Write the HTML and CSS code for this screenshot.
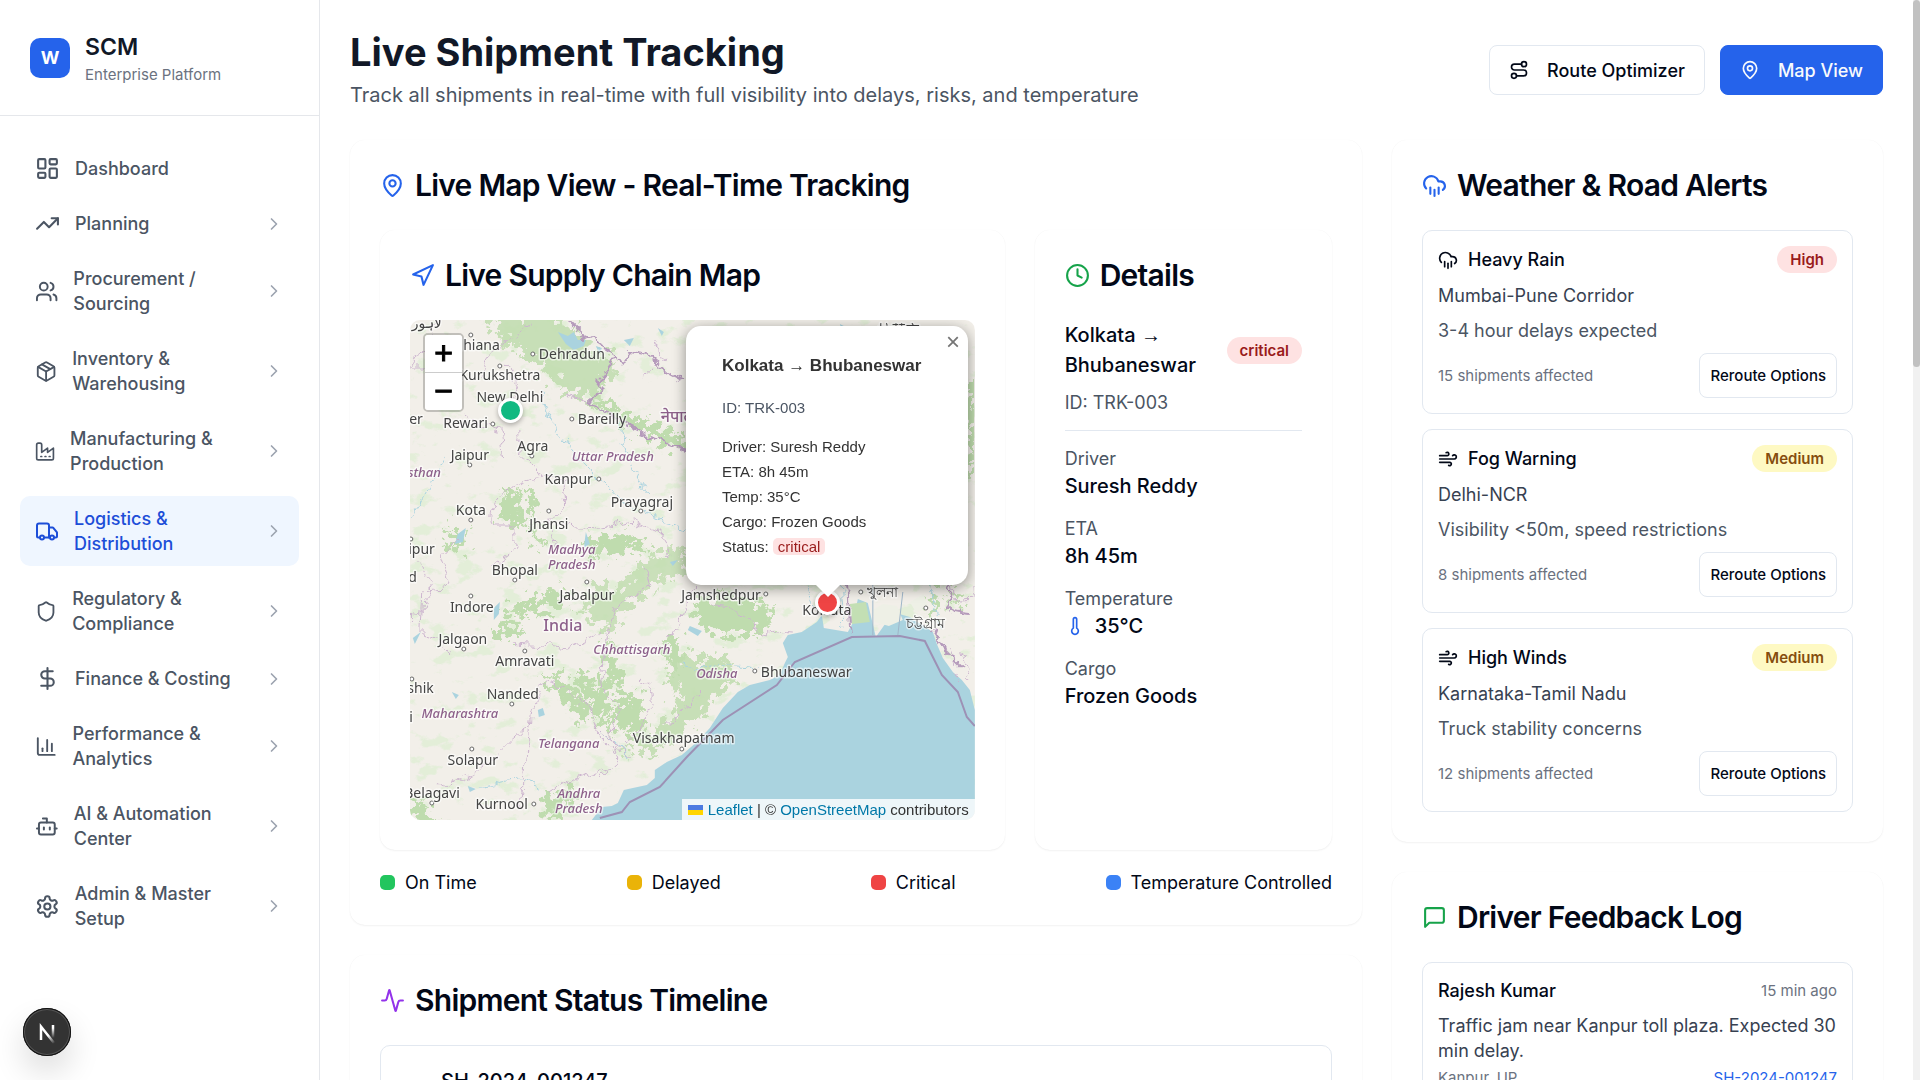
FILE: index.html
```html
<!DOCTYPE html>
<html lang="en">
<head>
<meta charset="utf-8">
<meta name="viewport" content="width=device-width, initial-scale=1">
<title>Live Shipment Tracking</title>
<link rel="stylesheet" href="styles.css">
</head>
<body>
<svg class="sprite" aria-hidden="true">
  <symbol id="chevron" viewBox="0 0 24 24"><path d="m9 18 6-6-6-6"/></symbol>
  <symbol id="dashboard" viewBox="0 0 24 24"><rect x="3" y="3" width="7" height="9" rx="1"/><rect x="14" y="3" width="7" height="5" rx="1"/><rect x="14" y="12" width="7" height="9" rx="1"/><rect x="3" y="16" width="7" height="5" rx="1"/></symbol>
  <symbol id="trend" viewBox="0 0 24 24"><path d="M22 7l-8.500 8.500-5-5L2 17"/><path d="M16 7h6v6"/></symbol>
  <symbol id="users" viewBox="0 0 24 24"><path d="M16 21v-2a4 4 0 0 0-4-4H6a4 4 0 0 0-4 4v2"/><circle cx="9" cy="7" r="4"/><path d="M22 21v-2a4 4 0 0 0-3-3.870"/><path d="M16 3.130a4 4 0 0 1 0 7.750"/></symbol>
  <symbol id="package" viewBox="0 0 24 24"><path d="M11 21.730a2 2 0 0 0 2 0l7-4A2 2 0 0 0 21 16V8a2 2 0 0 0-1-1.730l-7-4a2 2 0 0 0-2 0l-7 4A2 2 0 0 0 3 8v8a2 2 0 0 0 1 1.730z"/><path d="M12 22V12"/><path d="M3.290 7 12 12l8.710-5"/><path d="m7.500 4.270 9 5.150"/></symbol>
  <symbol id="factory" viewBox="0 0 24 24"><path d="M2 20a2 2 0 0 0 2 2h16a2 2 0 0 0 2-2V8l-7 5V8l-7 5V4a2 2 0 0 0-2-2H4a2 2 0 0 0-2 2Z"/><path d="M17 18h1"/><path d="M12 18h1"/><path d="M7 18h1"/></symbol>
  <symbol id="truck" viewBox="0 0 24 24"><path d="M14 18V6a2 2 0 0 0-2-2H4a2 2 0 0 0-2 2v11a1 1 0 0 0 1 1h2"/><path d="M15 18H9"/><path d="M19 18h2a1 1 0 0 0 1-1v-3.650a1 1 0 0 0-.220-.624l-3.480-4.350A1 1 0 0 0 17.520 8H14"/><circle cx="17" cy="18" r="2"/><circle cx="7" cy="18" r="2"/></symbol>
  <symbol id="shield" viewBox="0 0 24 24"><path d="M20 13c0 5-3.500 7.500-7.660 8.950a1 1 0 0 1-.670-.010C7.500 20.500 4 18 4 13V6a1 1 0 0 1 1-1c2 0 4.500-1.200 6.240-2.720a1.170 1.170 0 0 1 1.520 0C14.510 3.810 17 5 19 5a1 1 0 0 1 1 1z"/></symbol>
  <symbol id="dollar" viewBox="0 0 24 24"><path d="M12 2v20"/><path d="M17 5H9.500a3.500 3.500 0 0 0 0 7h5a3.500 3.500 0 0 1 0 7H6"/></symbol>
  <symbol id="chart" viewBox="0 0 24 24"><path d="M3 3v16a2 2 0 0 0 2 2h16"/><path d="M18 17V9"/><path d="M13 17V5"/><path d="M8 17v-3"/></symbol>
  <symbol id="bot" viewBox="0 0 24 24"><path d="M12 8V4H8"/><rect x="4" y="8" width="16" height="12" rx="2"/><path d="M2 14h2"/><path d="M20 14h2"/><path d="M15 13v2"/><path d="M9 13v2"/></symbol>
  <symbol id="gear" viewBox="0 0 24 24"><path d="M12.220 2h-.440a2 2 0 0 0-2 2v.180a2 2 0 0 1-1 1.730l-.430.250a2 2 0 0 1-2 0l-.150-.080a2 2 0 0 0-2.730.730l-.220.380a2 2 0 0 0 .730 2.730l.150.100a2 2 0 0 1 1 1.720v.510a2 2 0 0 1-1 1.740l-.150.090a2 2 0 0 0-.730 2.730l.220.380a2 2 0 0 0 2.730.730l.150-.080a2 2 0 0 1 2 0l.430.250a2 2 0 0 1 1 1.730V20a2 2 0 0 0 2 2h.440a2 2 0 0 0 2-2v-.180a2 2 0 0 1 1-1.730l.430-.250a2 2 0 0 1 2 0l.150.080a2 2 0 0 0 2.730-.730l.220-.390a2 2 0 0 0-.730-2.730l-.150-.080a2 2 0 0 1-1-1.740v-.500a2 2 0 0 1 1-1.740l.150-.090a2 2 0 0 0 .730-2.730l-.220-.380a2 2 0 0 0-2.730-.730l-.150.080a2 2 0 0 1-2 0l-.430-.250a2 2 0 0 1-1-1.730V4a2 2 0 0 0-2-2z"/><circle cx="12" cy="12" r="3"/></symbol>
  <symbol id="route" viewBox="0 0 24 24"><circle cx="6" cy="19" r="3"/><path d="M9 19h8.500a3.500 3.500 0 0 0 0-7h-11a3.500 3.500 0 0 1 0-7H15"/><circle cx="18" cy="5" r="3"/></symbol>
  <symbol id="pin" viewBox="0 0 24 24"><path d="M20 10c0 4.993-5.539 10.193-7.399 11.799a1 1 0 0 1-1.202 0C9.539 20.193 4 14.993 4 10a8 8 0 0 1 16 0"/><circle cx="12" cy="10" r="3"/></symbol>
  <symbol id="navigation" viewBox="0 0 24 24"><path d="M3 11 22 2l-9 19-2-8-8-2z"/></symbol>
  <symbol id="clock" viewBox="0 0 24 24"><circle cx="12" cy="12" r="10"/><path d="M12 6v6l4 2"/></symbol>
  <symbol id="thermometer" viewBox="0 0 24 24"><path d="M14 4v10.540a4 4 0 1 1-4 0V4a2 2 0 0 1 4 0Z"/></symbol>
  <symbol id="rain" viewBox="0 0 24 24"><path d="M4 14.899A7 7 0 1 1 15.710 8h1.790a4.500 4.500 0 0 1 2.500 8.242"/><path d="M16 14v6"/><path d="M8 14v6"/><path d="M12 16v6"/></symbol>
  <symbol id="wind" viewBox="0 0 24 24"><path d="M12.800 19.600A2 2 0 1 0 14 16H2"/><path d="M17.500 8a2.500 2.500 0 1 1 2 4H2"/><path d="M9.800 4.400A2 2 0 1 1 11 8H2"/></symbol>
  <symbol id="message" viewBox="0 0 24 24"><path d="M21 15a2 2 0 0 1-2 2H7l-4 4V5a2 2 0 0 1 2-2h14a2 2 0 0 1 2 2z"/></symbol>
  <symbol id="activity" viewBox="0 0 24 24"><path d="M22 12h-2.480a2 2 0 0 0-1.930 1.460l-2.350 8.360a.250.250 0 0 1-.480 0L9.240 2.180a.250.250 0 0 0-.480 0l-2.350 8.360A2 2 0 0 1 4.490 12H2"/></symbol>
</svg>

<div class="app">
  <aside class="sidebar">
    <div class="brand">
      <span class="brand-mark">W</span>
      <div>
        <div class="brand-name">SCM</div>
        <div class="brand-sub">Enterprise Platform</div>
      </div>
    </div>
    <nav class="nav">
      <a class="nav-item" href="#"><span class="nav-label"><svg class="icon"><use href="#dashboard"/></svg><span>Dashboard</span></span></a>
      <button class="nav-item" type="button"><span class="nav-label"><svg class="icon"><use href="#trend"/></svg><span>Planning</span></span><svg class="icon-sm chevron"><use href="#chevron"/></svg></button>
      <button class="nav-item" type="button"><span class="nav-label"><svg class="icon"><use href="#users"/></svg><span>Procurement / Sourcing</span></span><svg class="icon-sm chevron"><use href="#chevron"/></svg></button>
      <button class="nav-item" type="button"><span class="nav-label"><svg class="icon"><use href="#package"/></svg><span>Inventory &amp; Warehousing</span></span><svg class="icon-sm chevron"><use href="#chevron"/></svg></button>
      <button class="nav-item" type="button"><span class="nav-label"><svg class="icon"><use href="#factory"/></svg><span>Manufacturing &amp; Production</span></span><svg class="icon-sm chevron"><use href="#chevron"/></svg></button>
      <button class="nav-item active" type="button"><span class="nav-label"><svg class="icon"><use href="#truck"/></svg><span>Logistics &amp; Distribution</span></span><svg class="icon-sm chevron"><use href="#chevron"/></svg></button>
      <button class="nav-item" type="button"><span class="nav-label"><svg class="icon"><use href="#shield"/></svg><span>Regulatory &amp; Compliance</span></span><svg class="icon-sm chevron"><use href="#chevron"/></svg></button>
      <button class="nav-item" type="button"><span class="nav-label"><svg class="icon"><use href="#dollar"/></svg><span>Finance &amp; Costing</span></span><svg class="icon-sm chevron"><use href="#chevron"/></svg></button>
      <button class="nav-item" type="button"><span class="nav-label"><svg class="icon"><use href="#chart"/></svg><span>Performance &amp; Analytics</span></span><svg class="icon-sm chevron"><use href="#chevron"/></svg></button>
      <button class="nav-item" type="button"><span class="nav-label"><svg class="icon"><use href="#bot"/></svg><span>AI &amp; Automation Center</span></span><svg class="icon-sm chevron"><use href="#chevron"/></svg></button>
      <button class="nav-item" type="button"><span class="nav-label"><svg class="icon"><use href="#gear"/></svg><span>Admin &amp; Master Setup</span></span><svg class="icon-sm chevron"><use href="#chevron"/></svg></button>
    </nav>
  </aside>

  <main class="main">
    <header class="page-head">
      <div>
        <h1>Live Shipment Tracking</h1>
        <p class="subtitle">Track all shipments in real-time with full visibility into delays, risks, and temperature</p>
      </div>
      <div class="actions">
        <button class="btn" type="button"><svg class="icon-sm"><use href="#route"/></svg>Route Optimizer</button>
        <button class="btn btn-primary" type="button"><svg class="icon-sm"><use href="#pin"/></svg>Map View</button>
      </div>
    </header>

    <div class="columns">
      <div class="col-main">
        <section class="card">
          <h2 class="card-title"><svg class="icon blue"><use href="#pin"/></svg>Live Map View - Real-Time Tracking</h2>
          <div class="map-grid">
            <section class="card map-card">
              <h2 class="card-title"><svg class="icon blue"><use href="#navigation"/></svg>Live Supply Chain Map</h2>
              <div class="map">
                <svg class="map-tiles" viewBox="0 0 565 500" preserveAspectRatio="xMidYMid slice" role="img" aria-label="Map of India">
                  <defs>
                    <filter id="rough" x="0" y="0" width="565" height="500" filterUnits="userSpaceOnUse"><feTurbulence type="fractalNoise" baseFrequency="0.120" numOctaves="4" seed="4"/><feDisplacementMap in="SourceGraphic" scale="38" xChannelSelector="R" yChannelSelector="G"/></filter>
                    <filter id="speckle" x="0" y="0" width="565" height="500" filterUnits="userSpaceOnUse"><feTurbulence type="fractalNoise" baseFrequency="0.045 0.070" numOctaves="5" seed="11"/><feColorMatrix values="0 0 0 0 0.720  0 0 0 0 0.850  0 0 0 0 0.640  0 9 0 0 -5.200"/><feComposite in2="SourceGraphic" operator="in"/></filter>
                    <filter id="jag" x="-10" y="-10" width="585" height="520" filterUnits="userSpaceOnUse"><feTurbulence type="fractalNoise" baseFrequency="0.090" numOctaves="3" seed="7"/><feDisplacementMap in="SourceGraphic" scale="14" xChannelSelector="R" yChannelSelector="G"/></filter>
                  </defs>
                  <rect width="565" height="500" fill="#f2efe9"/>
                  <rect width="565" height="500" fill="#fff" filter="url(#speckle)" opacity=".700"/>
                  <g fill="#bfdcae" filter="url(#rough)">
                    <path d="M78-5h75l24 32 30 15-24 40-27-10-33-30-32-22z" opacity=".850"/>
                    <path d="M188 76l32 18 55 22v14l-40-14-48-30z"/>
                    <path d="M95 172l14-2-2 20 12 14-18 4-10-16zM118 172l10 2-2 24 8 30-10-6-6-30zM32 208l24 4-6 18-10-4z"/>
                    <path d="M172 222l44-10 24 14-20 4-38 10zM92 290l42-16 30-4-12 14-54 14zM82 308l30-4-8 14-16 2z"/>
                    <path d="M240 236l38-8v24l-30 6-16 22-22 8-8 26-18-12-14-14 16-26 18 10z" opacity=".800"/>
                    <path d="M200 318l12 40-14 22 6 36-16-20-24-40 14-4 10 20zM212 372l18 4 4 30-16 10-16-22z"/>
                    <path d="M266 330l26 10 22-8 6 30-20 24-26 26-20 10-20 14-14-4 10-16 30-16 8-24-10-20z" opacity=".850"/>
                    <path d="M284 282l30-6 50 10-12 28-36 4-30-16zM250 322l20-6 2 30-8 8z"/>
                    <path d="M132 352l20 6 24 24 4 24-14-10-20-26zM136 476l20-8 18 6-24 12-6 18h-10zM-2 474l16 10 14 18H4z"/>
                    <path d="M558 70l10-14v100l-12-6zM540 268l8-4 2 20-8 4zM520 266l10 6-4 26-8-4z"/>
                  </g>
                  <g fill="#aad3df">
                    <path d="M182 500l10-13 10-1 6-3 6-13 9-2 14-3 8-7 0-8 12-8 15-7 15-13 13-14 13-20 15-16 12-7 20-5 10-5 5-12 3-6-5-14 5-8 14-3 15-10 5-7 2 13 24 4 5-9 5-24 10 4 8 34 10-14 10-10 14 4L523 312l4 12 6 14 10 14 9 8 8 10 5 20V500z"/>
                    <path d="M148 12l10 4 6-4 4 8 8 0-2 6-10 4-8-6zM186 26l6 2-2 6zM214 20l10-2-4 8zM248 8l6 4-2 4zM340 6l10 2-4 6zM430 4l8 4-6 2zM176 212l4 12-6 4z"/>
                    <path d="M48 214l8-6-3 14-8 2zM84 288l6-6-1 12-5 6zM42 372l7 3-3 4zM58 466l8 3-6 3zM128 390l5-2 2 7-6 2zM3 318l8-6-6 12zM280 306l12 5-4 5-10-6zM286 308l8-3zM260 242l8-2-5 6z"/>
                  </g>
                  <g fill="none" stroke="#aad3df" filter="url(#jag)">
                    <path d="M130 70c10 40 30 60 60 90s50 40 90 50M210 105c6 30 12 50 30 70M0 200c20-30 24-40 34-60M190 410c10 10 26 16 30 30M70 468c20 0 30-14 60-2M270 345c30 8 50-6 80 6M392 250l12 40M430 245l4 60M520 265l10 45"/>
                  </g>
                  <path d="M463 290l10-6 14 2 6 14-14 6-14-4zM500 282l14-8 4 12-12 6z" fill="#eef0e6"/>
                  <path d="M440 284l16-2 4 20-18 2z" fill="#c3dfb4"/>
                  <g fill="none" stroke="#cdb5cf" filter="url(#jag)">
                    <path d="M30 0C16 20 10 36 0 50M0 46h24M54 92l14 12 22 6 4 26M96 84c14-8 14-30 0-40M93 24c-20 12-20 26-22 32M93 24l30-20M110 110v26l16 10 6 10 22 6 2 20-18 20 8 22M132 156c-40 8-56 36-48 50h20v24l-20 16M50 216l-18 20 10 30-30 4-2 44 22 6 8 16M150 205l40 2 34-6 30 14 6 20M300 250l-20 20-8 30-14 20M196 320l10-34 34-22-6-20M104 323l30 2 24 4 34-16M10 240l12 30-10 20M0 300l14-12M196 320l-6 50 20 18-10 24 10 26-20 20M132 362l20 4 26 20 10 28 20 20M132 362l-10 30-6 46-6 50M120 406c-30 20-30 40-90 60M232 360c20 10 10 40-20 66M250 405l10 0 14-14 16-18M200 448c-20 6-40 10-60 24M300 285c20 0 40 10 44 22s20 4 40 6M190 410l30 26M537 240l6 40 20-2 2-20"/>
                    <path d="M245 20l8 20-22 18M180 83l-26-10"/>
                    <path d="M545 352l6 12M552 330l8 26M540 326l4 20"/>
                  </g>
                  <g fill="none" stroke="#b59abb" stroke-width="2">
                    <g filter="url(#jag)"><path d="M157 0l15 15 15 7 20 13 6 8 7-11 18 3 19 17 18 10M207 37l-17 21-2 12-8 13 37 22 20 10 20 7 18 8M437 265l4 50M537 262l5 30 18 2M522 310l12 20 20 20"/></g>
                    <path d="M190 498l22-6 8-10 30-15 27-30 36-37 54-35 18-23 57-25 48-1 25 5 8 16 9 18 16 17 9 25 8 9" stroke="#9d91b5"/>
                    <path d="M463 265v50M493 272l-5 43" stroke="#9fb6c9" stroke-width="1"/>
                  </g>
                  <g class="dots"><circle cx="61" cy="15" r="2"/><circle cx="123" cy="34" r="2"/><circle cx="90" cy="46" r="2"/><circle cx="83" cy="104" r="2"/><circle cx="162" cy="99" r="2"/><circle cx="122" cy="136" r="2"/><circle cx="60" cy="145" r="2"/><circle cx="189" cy="159" r="2"/><circle cx="231" cy="191" r="2"/><circle cx="61" cy="200" r="2"/><circle cx="139" cy="191" r="2"/><circle cx="1" cy="219" r="2"/><circle cx="105" cy="260" r="2"/><circle cx="177" cy="262" r="2"/><circle cx="356" cy="274" r="2"/><circle cx="61" cy="276" r="2"/><circle cx="54" cy="329" r="2"/><circle cx="115" cy="331" r="2"/><circle cx="2" cy="359" r="2"/><circle cx="102" cy="384" r="2"/><circle cx="272" cy="429" r="2"/><circle cx="62" cy="429" r="2"/><circle cx="22" cy="483" r="2"/><circle cx="124" cy="484" r="2"/><circle cx="345" cy="351" r="2"/><circle cx="451" cy="272" r="2"/><circle cx="516" cy="288" r="2"/></g>
                  <g class="city">
                    <text x="17" y="8" class="mid">لاہور</text>
                    <text x="90" y="30" class="end">Ludhiana</text>
                    <text x="129" y="39">Dehradun</text>
                    <text x="90" y="60" class="mid">Kurukshetra</text>
                    <text x="100" y="82" class="mid">New Delhi</text>
                    <text x="78" y="108" class="end">Rewari</text>
                    <text x="13" y="104" class="end">Bikaner</text>
                    <text x="168" y="104">Bareilly</text>
                    <text x="123" y="131" class="mid">Agra</text>
                    <text x="60" y="140" class="mid">Jaipur</text>
                    <text x="183" y="164" class="end">Kanpur</text>
                    <text x="232" y="187" class="mid">Prayagraj</text>
                    <text x="61" y="195" class="mid">Kota</text>
                    <text x="139" y="209" class="mid">Jhansi</text>
                    <text x="25" y="234" class="end">Udaipur</text>
                    <text x="105" y="255" class="mid">Bhopal</text>
                    <text x="7" y="262" class="end">Ahmedabad</text>
                    <text x="177" y="280" class="mid">Jabalpur</text>
                    <text x="351" y="280" class="end">Jamshedpur</text>
                    <text x="62" y="292" class="mid">Indore</text>
                    <text x="53" y="324" class="mid">Jalgaon</text>
                    <text x="115" y="346" class="mid">Amravati</text>
                    <text x="24" y="373" class="end">Nashik</text>
                    <text x="103" y="379" class="mid">Nanded</text>
                    <text x="3" y="402" class="end">Mumbai</text>
                    <text x="223" y="423">Visakhapatnam</text>
                    <text x="63" y="445" class="mid">Solapur</text>
                    <text x="50" y="478" class="end">Belagavi</text>
                    <text x="118" y="489" class="end">Kurnool</text>
                    <text x="351" y="357">Bhubaneswar</text>
                    <text x="417" y="295" class="mid">Kolkata</text>
                    <text x="457" y="277">খুলনা</text>
                    <text x="516" y="308" class="mid">চট্টগ্রাম</text>
                    <text x="468" y="15">拉薩市</text>
                  </g>
                  <g class="state">
                    <text x="31" y="157" class="end">Rajasthan</text>
                    <text x="203" y="141" class="mid">Uttar Pradesh</text>
                    <text x="162" y="234" class="mid">Madhya</text>
                    <text x="162" y="249" class="mid">Pradesh</text>
                    <text x="222" y="334" class="mid">Chhattisgarh</text>
                    <text x="50" y="398" class="mid">Maharashtra</text>
                    <text x="159" y="428" class="mid">Telangana</text>
                    <text x="169" y="478" class="mid">Andhra</text>
                    <text x="169" y="493" class="mid">Pradesh</text>
                    <text x="307" y="358" class="mid">Odisha</text>
                  </g>
                  <g class="country">
                    <text x="153" y="311" class="mid">India</text>
                    <text x="251" y="102">नेपाल</text>
                  </g>
                </svg>
                <span class="marker marker-ok"></span>
                <span class="marker marker-critical"></span>
                <div class="zoom-control">
                  <button type="button" aria-label="Zoom in">+</button>
                  <button type="button" aria-label="Zoom out">−</button>
                </div>
                <div class="popup">
                  <button class="popup-close" type="button" aria-label="Close popup">×</button>
                  <h3>Kolkata <span class="arrow">→</span> Bhubaneswar</h3>
                  <p class="popup-id">ID: TRK-003</p>
                  <div>Driver: Suresh Reddy</div>
                  <div>ETA: 8h 45m</div>
                  <div>Temp: 35°C</div>
                  <div>Cargo: Frozen Goods</div>
                  <div>Status: <span class="popup-status">critical</span></div>
                  <svg class="popup-tip" viewBox="0 0 24 12"><path d="M0 0h24L12 12z" fill="#fff"/></svg>
                </div>
                <div class="attribution">
                  <svg class="flag" viewBox="0 0 15 10"><path fill="#4c7be1" d="M0 0h15v5H0z"/><path fill="#ffd500" d="M0 5h15v5H0z"/></svg>
                  <span><a href="#">Leaflet</a> | © <a href="#">OpenStreetMap</a> contributors</span>
                </div>
              </div>
            </section>

            <section class="card">
              <h2 class="card-title"><svg class="icon green"><use href="#clock"/></svg>Details</h2>
              <div class="detail-head">
                <h3>Kolkata <span class="arrow">→</span> Bhubaneswar</h3>
                <span class="badge badge-red">critical</span>
              </div>
              <p class="detail-id">ID: TRK-003</p>
              <dl class="details">
                <div><dt>Driver</dt><dd>Suresh Reddy</dd></div>
                <div><dt>ETA</dt><dd>8h 45m</dd></div>
                <div><dt>Temperature</dt><dd><svg class="icon-sm blue"><use href="#thermometer"/></svg>35°C</dd></div>
                <div><dt>Cargo</dt><dd>Frozen Goods</dd></div>
              </dl>
            </section>
          </div>
          <ul class="legend">
            <li><span class="swatch on-time"></span>On Time</li>
            <li><span class="swatch delayed"></span>Delayed</li>
            <li><span class="swatch critical"></span>Critical</li>
            <li><span class="swatch temperature"></span>Temperature Controlled</li>
          </ul>
        </section>

        <section class="card">
          <h2 class="card-title"><svg class="icon purple"><use href="#activity"/></svg>Shipment Status Timeline</h2>
          <div class="shipment">
            <svg class="icon blue"><use href="#truck"/></svg>
            <div class="shipment-id">SH-2024-001247</div>
          </div>
        </section>
      </div>

      <div class="col-side">
        <section class="card">
          <h2 class="card-title"><svg class="icon blue"><use href="#rain"/></svg>Weather &amp; Road Alerts</h2>
          <div class="stack">
            <article class="alert">
              <div class="row"><h3><svg class="icon-sm"><use href="#rain"/></svg>Heavy Rain</h3><span class="badge badge-red">High</span></div>
              <p class="place">Mumbai-Pune Corridor</p>
              <p class="note">3-4 hour delays expected</p>
              <div class="row"><span class="meta">15 shipments affected</span><button class="btn btn-sm" type="button">Reroute Options</button></div>
            </article>
            <article class="alert">
              <div class="row"><h3><svg class="icon-sm"><use href="#wind"/></svg>Fog Warning</h3><span class="badge badge-yellow">Medium</span></div>
              <p class="place">Delhi-NCR</p>
              <p class="note">Visibility &lt;50m, speed restrictions</p>
              <div class="row"><span class="meta">8 shipments affected</span><button class="btn btn-sm" type="button">Reroute Options</button></div>
            </article>
            <article class="alert">
              <div class="row"><h3><svg class="icon-sm"><use href="#wind"/></svg>High Winds</h3><span class="badge badge-yellow">Medium</span></div>
              <p class="place">Karnataka-Tamil Nadu</p>
              <p class="note">Truck stability concerns</p>
              <div class="row"><span class="meta">12 shipments affected</span><button class="btn btn-sm" type="button">Reroute Options</button></div>
            </article>
          </div>
        </section>

        <section class="card">
          <h2 class="card-title"><svg class="icon green"><use href="#message"/></svg>Driver Feedback Log</h2>
          <article class="feedback">
            <div class="row"><h3>Rajesh Kumar</h3><span class="meta">15 min ago</span></div>
            <p class="message">Traffic jam near Kanpur toll plaza. Expected 30 min delay.</p>
            <div class="row"><span class="meta">Kanpur, UP</span><a class="ref" href="#">SH-2024-001247</a></div>
          </article>
        </section>
      </div>
    </div>
  </main>
  <div class="rail"><div class="thumb"></div></div>
</div>

<button class="dev-badge" type="button" aria-label="Open developer tools">
  <svg viewBox="0 0 48 48" fill="none" stroke-width="2.500">
    <defs>
      <linearGradient id="fade-down" gradientUnits="userSpaceOnUse" x1="0" y1="20" x2="0" y2="30"><stop offset="0" stop-color="#fff"/><stop offset="1" stop-color="#fff" stop-opacity="0"/></linearGradient>
      <linearGradient id="fade-out" gradientUnits="userSpaceOnUse" x1="26" y1="27" x2="32" y2="35"><stop offset="0" stop-color="#fff"/><stop offset="1" stop-color="#fff" stop-opacity="0"/></linearGradient>
    </defs>
    <path d="M18 32V18.500L31 35" stroke="url(#fade-out)"/>
    <path d="M30 17v13" stroke="url(#fade-down)"/>
  </svg>
</button>
</body>
</html>
```
FILE: styles.css
```css
*, *::before, *::after { box-sizing: border-box; }

body, h1, h2, h3, p, ul, dl, dd { margin: 0; padding: 0; }

body {
  font-family: Inter, "Noto Sans", sans-serif;
  font-size: 17px;
  line-height: 25px;
  color: #020817;
  background: #fff;
  overflow: hidden;
}

button {
  font: inherit;
  color: inherit;
  background: none;
  border: 0;
  cursor: pointer;
}

a { color: inherit; text-decoration: none; }

.sprite { display: none; }

.icon, .icon-sm {
  fill: none;
  stroke: currentColor;
  stroke-width: 2;
  stroke-linecap: round;
  stroke-linejoin: round;
}

.icon { width: 25px; height: 25px; }
.icon-sm { width: 20px; height: 20px; flex-shrink: 0; }

.blue { color: #2563eb; }
.green { color: #16a34a; }
.purple { color: #9333ea; }

/* Shell */
.app {
  display: grid;
  grid-template-columns: 320px minmax(0, 1fr) 7px;
  height: 100vh;
}

.sidebar {
  border-right: 1px solid #e5e7eb;
  overflow: hidden;
}

.main { padding: 30px; overflow: hidden; }

.rail { background: #f1f1f1; }
.thumb { height: 34%; background: #c1c1c1; border-radius: 4px; }

/* Sidebar */
.brand {
  display: flex;
  align-items: center;
  gap: 15px;
  padding: 30px;
  border-bottom: 1px solid #e5e7eb;
}

.brand-mark {
  display: grid;
  place-items: center;
  width: 40px;
  height: 40px;
  border-radius: 10px;
  background: #2563eb;
  color: #fff;
  font-size: 18px;
  font-weight: 700;
}

.brand-name { font-size: 23px; line-height: 35px; font-weight: 600; color: #111827; }
.brand-sub { font-size: 15px; line-height: 20px; color: #6b7280; }

.nav {
  display: flex;
  flex-direction: column;
  gap: 10px;
  padding: 30px 20px;
}

.nav-item {
  display: flex;
  align-items: center;
  justify-content: space-between;
  padding: 10px 15px;
  border-radius: 10px;
  font-size: 18px;
  font-weight: 500;
  text-align: left;
  color: #4b5563;
}

.nav-item.active { background: #eff6ff; color: #1d4ed8; }

.nav-label { display: flex; align-items: center; gap: 15px; }
.chevron { color: #9ca3af; }

/* Header */
.page-head {
  display: flex;
  align-items: center;
  justify-content: space-between;
  margin-bottom: 30px;
}

h1 { font-size: 38px; line-height: 45px; font-weight: 700; color: #111827; }
.subtitle { margin-top: 5px; font-size: 20px; line-height: 30px; color: #4b5563; }

.actions { display: flex; gap: 15px; }

.btn {
  display: flex;
  align-items: center;
  gap: 18px;
  height: 50px;
  padding: 0 19px;
  border: 1px solid #e2e8f0;
  border-radius: 8px;
  background: #fff;
  font-size: 18px;
  font-weight: 500;
}

.btn-primary { border-color: #2563eb; background: #2563eb; color: #f8fafc; }
.btn-sm { height: 45px; padding: 0 10px; font-size: 15px; }

/* Cards */
.columns {
  display: grid;
  grid-template-columns: repeat(12, minmax(0, 1fr));
  gap: 30px;
}

.col-main { grid-column: span 8; }
.col-side { grid-column: span 4; }

.col-main, .col-side {
  display: flex;
  flex-direction: column;
  gap: 30px;
}

.card {
  padding: 30px;
  border-radius: 15px;
  background: #fff;
  box-shadow: 0 1px 2px rgba(0, 0, 0, 0.05), 0 0 1px rgba(0, 0, 0, 0.05);
}

.card-title {
  display: flex;
  align-items: center;
  gap: 10px;
  margin-bottom: 30px;
  font-size: 30px;
  line-height: 30px;
  font-weight: 600;
  letter-spacing: -0.025em;
}

h3 { font-size: 18px; line-height: 25px; font-weight: 500; }

.badge {
  padding: 4px 13px 3px;
  border-radius: 14px;
  font-size: 15px;
  line-height: 20px;
  font-weight: 600;
}

.badge-red { background: #fee2e2; color: #991b1b; }
.badge-yellow { background: #fef9c3; color: #854d0e; }

/* Map card */
.map-grid {
  display: grid;
  grid-template-columns: repeat(3, minmax(0, 1fr));
  gap: 30px;
}

.map-card { grid-column: span 2; }

.map {
  position: relative;
  height: 500px;
  border-radius: 10px;
  overflow: hidden;
  font-family: "Liberation Sans", Arial, sans-serif;
  font-size: 15px;
  color: #333;
}

.map-tiles { display: block; width: 100%; height: 100%; }

.map-tiles text {
  font-family: "Noto Sans", "Noto Sans CJK TC", "DejaVu Sans", sans-serif;
  paint-order: stroke;
  stroke: #fff;
  stroke-opacity: 0.6;
  stroke-width: 3px;
  stroke-linejoin: round;
}

.map-tiles .mid { text-anchor: middle; }
.map-tiles .end { text-anchor: end; }
.city { font-size: 14px; fill: #444; }
.state { font-size: 13px; font-style: italic; font-weight: 500; fill: #8d618b; }
.country { font-size: 16px; font-weight: 500; fill: #8d618b; }
.dots circle { fill: #fff; stroke: #666; }

.marker {
  position: absolute;
  width: 25px;
  height: 25px;
  border: 3px solid #fff;
  border-radius: 50%;
  box-shadow: 0 2px 5px rgba(0, 0, 0, 0.3);
}

.marker-ok { left: 88px; top: 78px; background: #10b981; }
.marker-critical { left: 405px; top: 270px; background: #ef4444; }

.zoom-control {
  position: absolute;
  left: 13px;
  top: 13px;
  border: 2px solid rgba(0, 0, 0, 0.2);
  border-radius: 5px;
  background-clip: padding-box;
}

.zoom-control button {
  display: block;
  width: 37px;
  height: 37px;
  padding: 0;
  background: #fff;
  color: #000;
  font: 32px/37px "Liberation Sans", Arial, sans-serif;
  -webkit-text-stroke: 1px #000;
}

.zoom-control button:first-child { height: 38px; border-bottom: 1px solid #ccc; border-radius: 3px 3px 0 0; }
.zoom-control button:last-child { border-radius: 0 0 3px 3px; }

.popup {
  position: absolute;
  left: 276px;
  top: 6px;
  width: 282px;
  padding: 25px 0 26px 36px;
  border-radius: 15px;
  background: #fff;
  box-shadow: 0 3px 14px rgba(0, 0, 0, 0.4);
  line-height: 25px;
}

.popup h3 { font-size: 17px; line-height: 30px; font-weight: 700; white-space: nowrap; }
.popup-id { margin: 14px 0; color: #4b5563; }
.popup-status { padding: 0 5px; border-radius: 5px; background: #fee2e2; color: #991b1b; }

.arrow { font-family: "Liberation Serif", serif; font-weight: 400; }

.popup-close {
  position: absolute;
  top: 0;
  right: 0;
  width: 30px;
  height: 32px;
  padding: 0;
  font-size: 24px;
  line-height: 32px;
  color: #757575;
}

.popup-tip {
  position: absolute;
  top: 100%;
  left: 130px;
  width: 24px;
  height: 12px;
}

.attribution {
  position: absolute;
  right: 0;
  bottom: 0;
  display: flex;
  align-items: center;
  gap: 5px;
  padding: 0 6px;
  background: rgba(255, 255, 255, 0.8);
  line-height: 21px;
}

.attribution a { color: #0078a8; }
.flag { width: 15px; height: 10px; }

/* Details */
.detail-head { display: flex; align-items: center; justify-content: space-between; }
.detail-head h3 { font-size: 20px; line-height: 30px; }

.detail-id {
  margin-top: 10px;
  padding-bottom: 15px;
  border-bottom: 1px solid #e2e8f0;
  font-size: 18px;
  color: #4b5563;
}

.details { display: grid; gap: 15px; padding-top: 15px; }
.details dt { font-size: 18px; color: #4b5563; }

.details dd {
  display: flex;
  align-items: center;
  gap: 10px;
  font-size: 20px;
  line-height: 30px;
  font-weight: 500;
}

.legend {
  display: flex;
  justify-content: space-between;
  margin-top: 20px;
  list-style: none;
  font-size: 18px;
}

.legend li { display: flex; align-items: center; gap: 10px; }
.swatch { width: 15px; height: 15px; border-radius: 5px; }
.on-time { background: #22c55e; }
.delayed { background: #eab308; }
.critical { background: #ef4444; }
.temperature { background: #3b82f6; }

/* Timeline */
.shipment {
  display: flex;
  align-items: center;
  gap: 15px;
  min-height: 150px;
  padding: 20px;
  border: 1px solid #e2e8f0;
  border-radius: 10px;
}

.shipment-id { align-self: flex-start; font-size: 20px; line-height: 30px; font-weight: 500; }

/* Alerts and feedback */
.stack { display: grid; gap: 15px; }

.alert, .feedback {
  padding: 15px;
  border: 1px solid #e2e8f0;
  border-radius: 10px;
}

.alert { display: grid; gap: 10px; }

.row { display: flex; align-items: center; justify-content: space-between; }
.row h3 { display: flex; align-items: center; gap: 10px; }

.place, .message { color: #374151; }
.note { color: #4b5563; }
.place, .note { font-size: 18px; }
.meta { font-size: 15px; line-height: 20px; color: #6b7280; }
.message { margin: 10px 0 5px; font-size: 18px; }
.ref { font-size: 15px; line-height: 20px; color: #2563eb; }

/* Floating developer badge */
.dev-badge {
  position: fixed;
  left: 23px;
  bottom: 24px;
  width: 48px;
  height: 48px;
  padding: 0;
  border-radius: 50%;
  background: #333;
  box-shadow: inset 0 0 0 1px #111, inset 0 0 0 2px #555, 0 16px 32px rgba(0, 0, 0, 0.14);
}

.dev-badge svg { display: block; }
```
